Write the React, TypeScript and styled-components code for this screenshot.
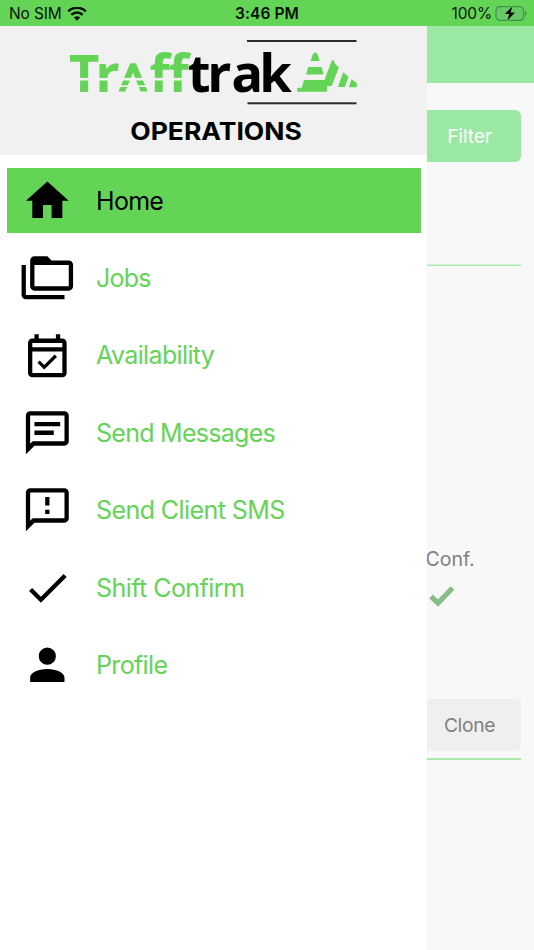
import React from 'react';
import styled, { createGlobalStyle } from 'styled-components';

const GREEN = '#63d456';
const PALE_GREEN = '#9be8a4';

const GlobalStyle = createGlobalStyle`
  * { box-sizing: border-box; }
  body { margin: 0; background: #fff; font-family: Inter, 'Liberation Sans', sans-serif; }
`;

const Screen = styled.div`
  width: 534px;
  height: 950px;
  display: flex;
  flex-direction: column;
  overflow: hidden;
`;

const StatusBar = styled.header`
  height: 26px;
  flex: none;
  display: grid;
  grid-template-columns: 1fr auto 1fr;
  align-items: center;
  padding: 2px 7px 0 9px;
  background: ${GREEN};
  color: #061005;
  font-size: 15.5px;
  line-height: 24px;
`;

const StatusGroup = styled.div<{ $end?: boolean }>`
  display: flex;
  align-items: center;
  gap: ${p => (p.$end ? '3px' : '5px')};
  justify-content: ${p => (p.$end ? 'flex-end' : 'flex-start')};
  letter-spacing: -0.15px;
  svg { display: block; }
`;

const Clock = styled.span`
  font-weight: 600;
  letter-spacing: 0.1px;
  margin-right: 2px;
`;

const Body = styled.div`
  flex: 1;
  min-height: 0;
  display: flex;
`;

const Drawer = styled.aside`
  width: 427px;
  flex: none;
  background: #fff;
`;

const Brand = styled.div`
  height: 129px;
  background: #f1f1f1;
  svg { display: block; }
`;

const Menu = styled.nav`
  display: flex;
  flex-direction: column;
  gap: 13px;
  padding: 13.4px 6.5px 0 7px;
`;

const MenuItem = styled.a<{ $active?: boolean }>`
  height: 64.4px;
  display: flex;
  align-items: center;
  gap: 23px;
  padding-left: 14px;
  background: ${p => (p.$active ? GREEN : 'transparent')};
  color: ${p => (p.$active ? '#000' : GREEN)};
  font-size: 25px;
`;

const MenuLabel = styled.span<{ $spacing: number }>`
  letter-spacing: ${p => p.$spacing}px;
  white-space: nowrap;
`;

const MenuIcon = styled.svg`
  width: 52px;
  height: 51.5px;
  flex: none;
  fill: #000;
  overflow: visible;
`;

const Page = styled.main`
  flex: 1;
  min-width: 0;
  background: #f8f8f8;
  overflow: hidden;
`;

const PageHeader = styled.div`
  height: 57px;
  background: ${PALE_GREEN};
`;

const PageContent = styled.div`
  display: flex;
  flex-direction: column;
  padding: 27px 13px 0 0;
`;

const PageButton = styled.button<{ $primary?: boolean }>`
  height: 51.5px;
  border: 0;
  border-radius: 0 6px 6px 0;
  padding: 0 9px 0 0;
  background: ${p => (p.$primary ? PALE_GREEN : '#efefef')};
  color: ${p => (p.$primary ? '#fff' : '#808080')};
  font: 19.3px Inter, 'Liberation Sans', sans-serif;
  letter-spacing: ${p => (p.$primary ? '-0.15px' : '-0.35px')};
`;

const Divider = styled.div<{ $top: number; $soft?: boolean }>`
  height: 2px;
  flex: none;
  margin-top: ${p => p.$top}px;
  background: #a8ebac;
  border-top: 1px solid ${p => (p.$soft ? '#d5f2d7' : '#a8ebac')};
`;

const Confirmed = styled.section`
  margin: 279px 0 92px;
  height: 62px;
  color: #808080;
  font-size: 19.5px;
  line-height: 28px;
  svg { display: block; margin: 12px 0 0 2px; }
`;

const ConfLabel = styled.div`
  margin-left: -1.5px;
`;

const LogoText = styled.text`
  font-family: 'Noto Sans', sans-serif;
  font-weight: 700;
  font-size: 52.5px;
`;

const TagLine = styled.text`
  font-family: Inter, sans-serif;
  font-weight: 700;
  font-size: 23.8px;
`;

const items = [
  { label: 'Home', spacing: -0.7, d: 'M10,20V14H14V20H19V12H22L12,3L2,12H5V20H10Z' },
  { label: 'Jobs', spacing: -0.75, d: 'M22,4A2,2 0 0,1 24,6V16A2,2 0 0,1 22,18H6A2,2 0 0,1 4,16V4A2,2 0 0,1 6,2H12L14,4H22M2,6V20H20V22H2A2,2 0 0,1 0,20V6H2M6,6V16H22V6H6Z' },
  { label: 'Availability', spacing: -0.63, d: 'M19 4h-1V2h-2v2H8V2H6v2H5c-1.1 0-2 .9-2 2v14c0 1.1.9 2 2 2h14c1.1 0 2-.9 2-2V6c0-1.1-.9-2-2-2zm0 16H5V10h14v10zm0-12H5V6h14v2zM10.56 18.46l5.94-5.93-1.07-1.06-4.87 4.87-2.11-2.11-1.06 1.06z' },
  { label: 'Send Messages', spacing: -0.72, d: 'M20,2A2,2 0 0,1 22,4V16A2,2 0 0,1 20,18H6L2,22V4A2,2 0 0,1 4,2H20M4,4V17.17L5.17,16H20V4H4M6,7H18V9H6V7M6,11H15V13H6V11Z' },
  { label: 'Send Client SMS', spacing: -0.58, d: 'M20,2A2,2 0 0,1 22,4V16A2,2 0 0,1 20,18H6L2,22V4A2,2 0 0,1 4,2H20M4,4V17.17L5.17,16H20V4H4M11,6H13V10H11V6M11,12H13V14H11V12Z' },
  { label: 'Shift Confirm', spacing: -0.55, d: 'M21,7L9,19L3.5,13.5L4.91,12.09L9,16.17L19.59,5.59L21,7Z' },
  { label: 'Profile', spacing: -0.65, d: 'M12,4A4,4 0 0,1 16,8A4,4 0 0,1 12,12A4,4 0 0,1 8,8A4,4 0 0,1 12,4M12,14C16.42,14 20,15.79 20,18V20H4V18C4,15.79 7.58,14 12,14Z' },
];

const WifiIcon = () => (
  <svg width="20" height="15" viewBox="0 0 20 15" fill="none" stroke="#071006" strokeWidth="2.5">
    <path d="M1.2 4.4A12.6 12.6 0 0 1 18.8 4.4" />
    <path d="M4.3 7.9A8.2 8.2 0 0 1 15.7 7.9" />
    <path d="M10 13.7 6.9 10.6a4.5 4.5 0 0 1 6.2 0z" fill="#071006" stroke="none" />
  </svg>
);

const BatteryIcon = () => (
  <svg width="32" height="16" viewBox="0 0 32 16">
    <rect x="1" y=".6" width="27.6" height="13.8" rx="4" fill="#68c968" stroke="#409246" strokeWidth="1.2" />
    <path d="M30 5v5q1.6-.6 1.6-2.5T30 5z" fill="#409246" />
    <path d="M17.5.3 9.8 8.1h4.4L12.4 14.7 20 6.6h-4.5z" fill="#000" stroke={GREEN} strokeWidth="1.6" paintOrder="stroke" />
  </svg>
);

const Logo = () => (
  <svg width="427" height="129" viewBox="0 26 427 129">
    <g fill="#2b2b2b">
      <rect x="247" y="40" width="109.5" height="2" />
      <rect x="247.5" y="102.3" width="109" height="2" />
    </g>
    <LogoText y="91.5" x="69 95.8 149.5 168.5" fill={GREEN}>Trff</LogoText>
    <LogoText y="91.5" x="187.8 207.5 231.5 259.2">trak</LogoText>
    <path d="M118.5 91.6 130.3 63.3h5.6L147.7 91.6h-7.2L133 72.5 125.3 91.6z" fill={GREEN} />
    <g fill="#f1f1f1">
      <rect x="76" y="77.9" width="111" height="2.6" />
      <rect x="117" y="85.3" width="32" height="1.7" />
    </g>
    <g fill={GREEN}>
      <path d="M310.6 61 312.7 54.5q.7-2 2.5-2T317.6 54.5l2 6.500z" />
      <path d="M308.3 67h13.3l2 7.4h-17.6z" />
      <path d="M304 80h20.500l7-18.800q.7-1.800 2.500-.8l.8 3.200 4 4-7.200 18.700h-4.500v5.500H297.300v-4h4.500z" />
      <path d="M343.2 72.2 348.6 76.8 344.7 87h-6.700z" />
      <path d="M351.7 79 356 82.6Q358.7 86.4 355.8 87.2h-6.900z" />
    </g>
    <path d="M327.5 86.6h5.5" stroke="#f1f1f1" strokeWidth="1" />
    <TagLine x="130.3" y="140.4" textLength="171.5" lengthAdjust="spacingAndGlyphs">OPERATIONS</TagLine>
  </svg>
);

export default function App() {
  return (
    <Screen>
      <GlobalStyle />
      <StatusBar>
        <StatusGroup><span>No SIM</span><WifiIcon /></StatusGroup>
        <Clock>3:46 PM</Clock>
        <StatusGroup $end><span>100%</span><BatteryIcon /></StatusGroup>
      </StatusBar>
      <Body>
        <Drawer>
          <Brand><Logo /></Brand>
          <Menu>
            {items.map((item, i) => (
              <MenuItem key={item.label} $active={i === 0}>
                <MenuIcon viewBox="-0.25 0 24.2 24"><path d={item.d} /></MenuIcon>
                <MenuLabel $spacing={item.spacing}>{item.label}</MenuLabel>
              </MenuItem>
            ))}
          </Menu>
        </Drawer>
        <Page>
          <PageHeader />
          <PageContent>
            <PageButton $primary>Filter</PageButton>
            <Divider $top={102.5} $soft />
            <Confirmed>
              <ConfLabel>Conf.</ConfLabel>
              <svg width="26" height="22" viewBox="0 0 26 22">
                <path d="M2 11.5 9 18 23.5 3" fill="none" stroke="#88bd85" strokeWidth="5.2" />
              </svg>
            </Confirmed>
            <PageButton>Clone</PageButton>
            <Divider $top={7.5} />
          </PageContent>
        </Page>
      </Body>
    </Screen>
  );
}
